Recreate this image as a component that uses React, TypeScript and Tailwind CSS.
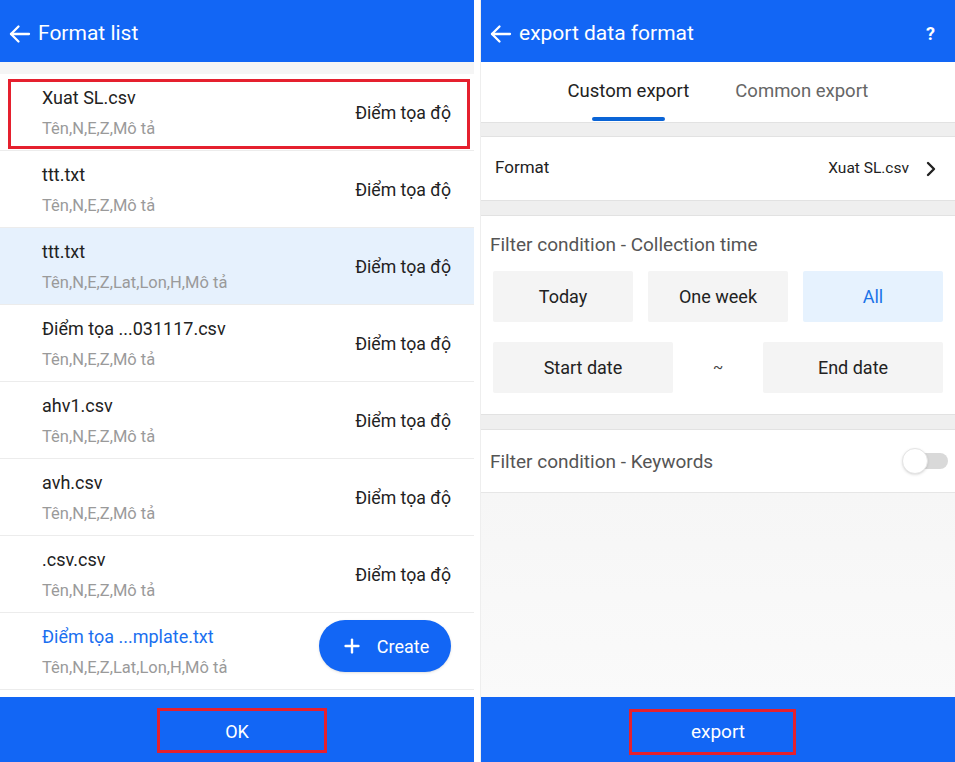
import { Plus } from "lucide-react";

const formats = [
  { name: "Xuat SL.csv", fields: "Tên,N,E,Z,Mô tả", boxed: true },
  { name: "ttt.txt", fields: "Tên,N,E,Z,Mô tả" },
  { name: "ttt.txt", fields: "Tên,N,E,Z,Lat,Lon,H,Mô tả", active: true },
  { name: "Điểm tọa ...031117.csv", fields: "Tên,N,E,Z,Mô tả" },
  { name: "ahv1.csv", fields: "Tên,N,E,Z,Mô tả" },
  { name: "avh.csv", fields: "Tên,N,E,Z,Mô tả" },
  { name: ".csv.csv", fields: "Tên,N,E,Z,Mô tả" },
  // last row's type label sits under the Create button
  { name: "Điểm tọa ...mplate.txt", fields: "Tên,N,E,Z,Lat,Lon,H,Mô tả", blue: true, covered: true },
];

const BackArrow = () => (
  <svg width="24" height="24" viewBox="0 0 24 24" fill="none" stroke="white" strokeWidth="2.3" strokeLinecap="round" strokeLinejoin="round">
    <path d="M21 12H3" />
    <path d="M10.5 4.5L3 12l7.5 7.5" />
  </svg>
);

const FormatList = () => {
  return (
    <div className="relative w-[474px] h-full flex flex-col bg-white">
      <div className="h-[62px] bg-[#1266f5] flex items-center pl-[8px] pt-[5px] shrink-0">
        <BackArrow />
        <span className="ml-[6px] text-[21px] text-white">Format list</span>
      </div>
      <div className="h-[12px] bg-[#f5f5f5] shrink-0" />

      <div className="flex flex-col">
        {formats.map((f, i) => (
          <div
            key={i}
            className={`relative h-[77px] flex items-center justify-between pl-[42px] pr-[23px] border-b border-[#ececec] ${f.active ? "bg-[#e6f1fd]" : "bg-white"}`}
          >
            <div className="flex flex-col">
              <span className={`text-[18px] leading-[24px] ${f.blue ? "text-[#1a6ff0]" : "text-[#222]"}`}>{f.name}</span>
              <span className="mt-[9px] text-[16.5px] leading-[20px] text-[#9a9a9a]">{f.fields}</span>
            </div>
            {!f.covered && <span className="mt-[3px] text-[17.7px] text-[#222]">Điểm tọa độ</span>}
            {f.boxed && (
              <div className="absolute left-[8px] top-[5px] w-[462px] h-[70px] border-[3px] border-[#e5202e]" />
            )}
          </div>
        ))}
      </div>

      {/* floating create button */}
      <button className="absolute left-[319px] top-[620px] w-[132px] h-[52px] rounded-full bg-[#1266f5] flex items-center justify-center gap-[14px] text-white shadow-sm">
        <Plus className="w-[22px] h-[22px]" strokeWidth={2.6} />
        <span className="text-[18px]">Create</span>
      </button>

      <div className="flex-1" />
      <div className="relative h-[65px] bg-[#1266f5] flex items-center justify-center pt-[4px] shrink-0">
        <span className="text-[18px] text-white">OK</span>
        <div className="absolute left-[157px] top-[11px] w-[170px] h-[45px] border-[3px] border-[#e5202e]" />
      </div>
    </div>
  );
};

const Strip = ({ h }: { h: string }) => (
  <div className={`${h} bg-[#efefef] border-y border-[#e2e2e2] shrink-0`} />
);

const ExportFormat = () => {
  return (
    <div className="w-[475px] h-full flex flex-col bg-[#f8f8f8] border-l border-[#eeeeee]">
      <div className="h-[62px] bg-[#1266f5] flex items-center pl-[8px] pr-[20px] pt-[5px] shrink-0">
        <BackArrow />
        <span className="ml-[6px] text-[21px] text-white">export data format</span>
        <span className="ml-auto text-[18px] font-bold text-white">?</span>
      </div>

      {/* tabs */}
      <div className="h-[60px] bg-white flex justify-center gap-[46px] shrink-0">
        <div className="flex flex-col items-center">
          <span className="mt-[18px] text-[18.5px] leading-[22px] text-[#222]">Custom export</span>
          <div className="mt-[15px] w-[73px] h-[4px] rounded-full bg-[#0a64d6]" />
        </div>
        <div className="flex flex-col items-center">
          <span className="mt-[18px] text-[18.5px] leading-[22px] text-[#666]">Common export</span>
        </div>
      </div>
      <Strip h="h-[15px]" />

      <div className="h-[63px] bg-white flex items-center pl-[14px] pr-[18px] shrink-0">
        <span className="text-[17px] text-[#222] -mt-[2px]">Format</span>
        <span className="ml-auto text-[15.5px] text-[#222] mt-[1px]">Xuat SL.csv</span>
        <svg className="ml-[16px]" width="12" height="16" viewBox="0 0 12 16" fill="none" stroke="#222" strokeWidth="2.4" strokeLinecap="round" strokeLinejoin="round">
          <path d="M3 2l6 6-6 6" />
        </svg>
      </div>
      <Strip h="h-[16px]" />

      <div className="bg-white pt-[17px] pb-[21px] px-[12px] shrink-0">
        <div className="-ml-[3px] text-[19px] leading-[24px] text-[#555]">Filter condition - Collection time</div>
        <div className="mt-[14px] grid grid-cols-3 gap-[15px]">
          <div className="h-[51px] bg-[#f4f4f4] rounded-[2px] flex items-center justify-center text-[18px] text-[#222]">Today</div>
          <div className="h-[51px] bg-[#f4f4f4] rounded-[2px] flex items-center justify-center text-[18px] text-[#222]">One week</div>
          <div className="h-[51px] bg-[#e6f2fe] rounded-[2px] flex items-center justify-center text-[18px] text-[#1a73e8]">All</div>
        </div>
        <div className="mt-[20px] flex items-center">
          <div className="w-[180px] h-[51px] bg-[#f4f4f4] rounded-[2px] flex items-center justify-center text-[18px] text-[#222]">Start date</div>
          <div className="flex-1 text-center text-[15px] text-[#444]">~</div>
          <div className="w-[180px] h-[51px] bg-[#f4f4f4] rounded-[2px] flex items-center justify-center text-[18px] text-[#222]">End date</div>
        </div>
      </div>
      <Strip h="h-[16px]" />

      <div className="h-[63px] bg-white flex items-center pl-[9px] pr-[7px] border-b border-[#e6e6e6] shrink-0">
        <span className="mt-[2px] text-[19px] text-[#555]">Filter condition - Keywords</span>
        <div className="ml-auto relative w-[46px] h-[28px] flex items-center">
          <div className="absolute right-0 w-[34px] h-[16px] rounded-full bg-[#d9d9d9]" />
          <div className="absolute left-0 w-[26px] h-[26px] rounded-full bg-white border border-[#e4e4e4] shadow-sm" />
        </div>
      </div>

      <div className="flex-1 bg-gradient-to-b from-[#f6f6f6] to-[#fafafa]" />

      <div className="relative h-[65px] bg-[#1266f5] flex items-center justify-center pt-[5px] shrink-0">
        <span className="text-[19px] text-white">export</span>
        <div className="absolute left-[148px] top-[12px] w-[167px] h-[46px] border-[3px] border-[#e5202e]" />
      </div>
    </div>
  );
};

export default function App() {
  return (
    <div className="w-[955px] h-[762px] flex gap-[6px] bg-white overflow-hidden font-['Roboto',sans-serif]">
      <FormatList />
      <ExportFormat />
    </div>
  );
}
